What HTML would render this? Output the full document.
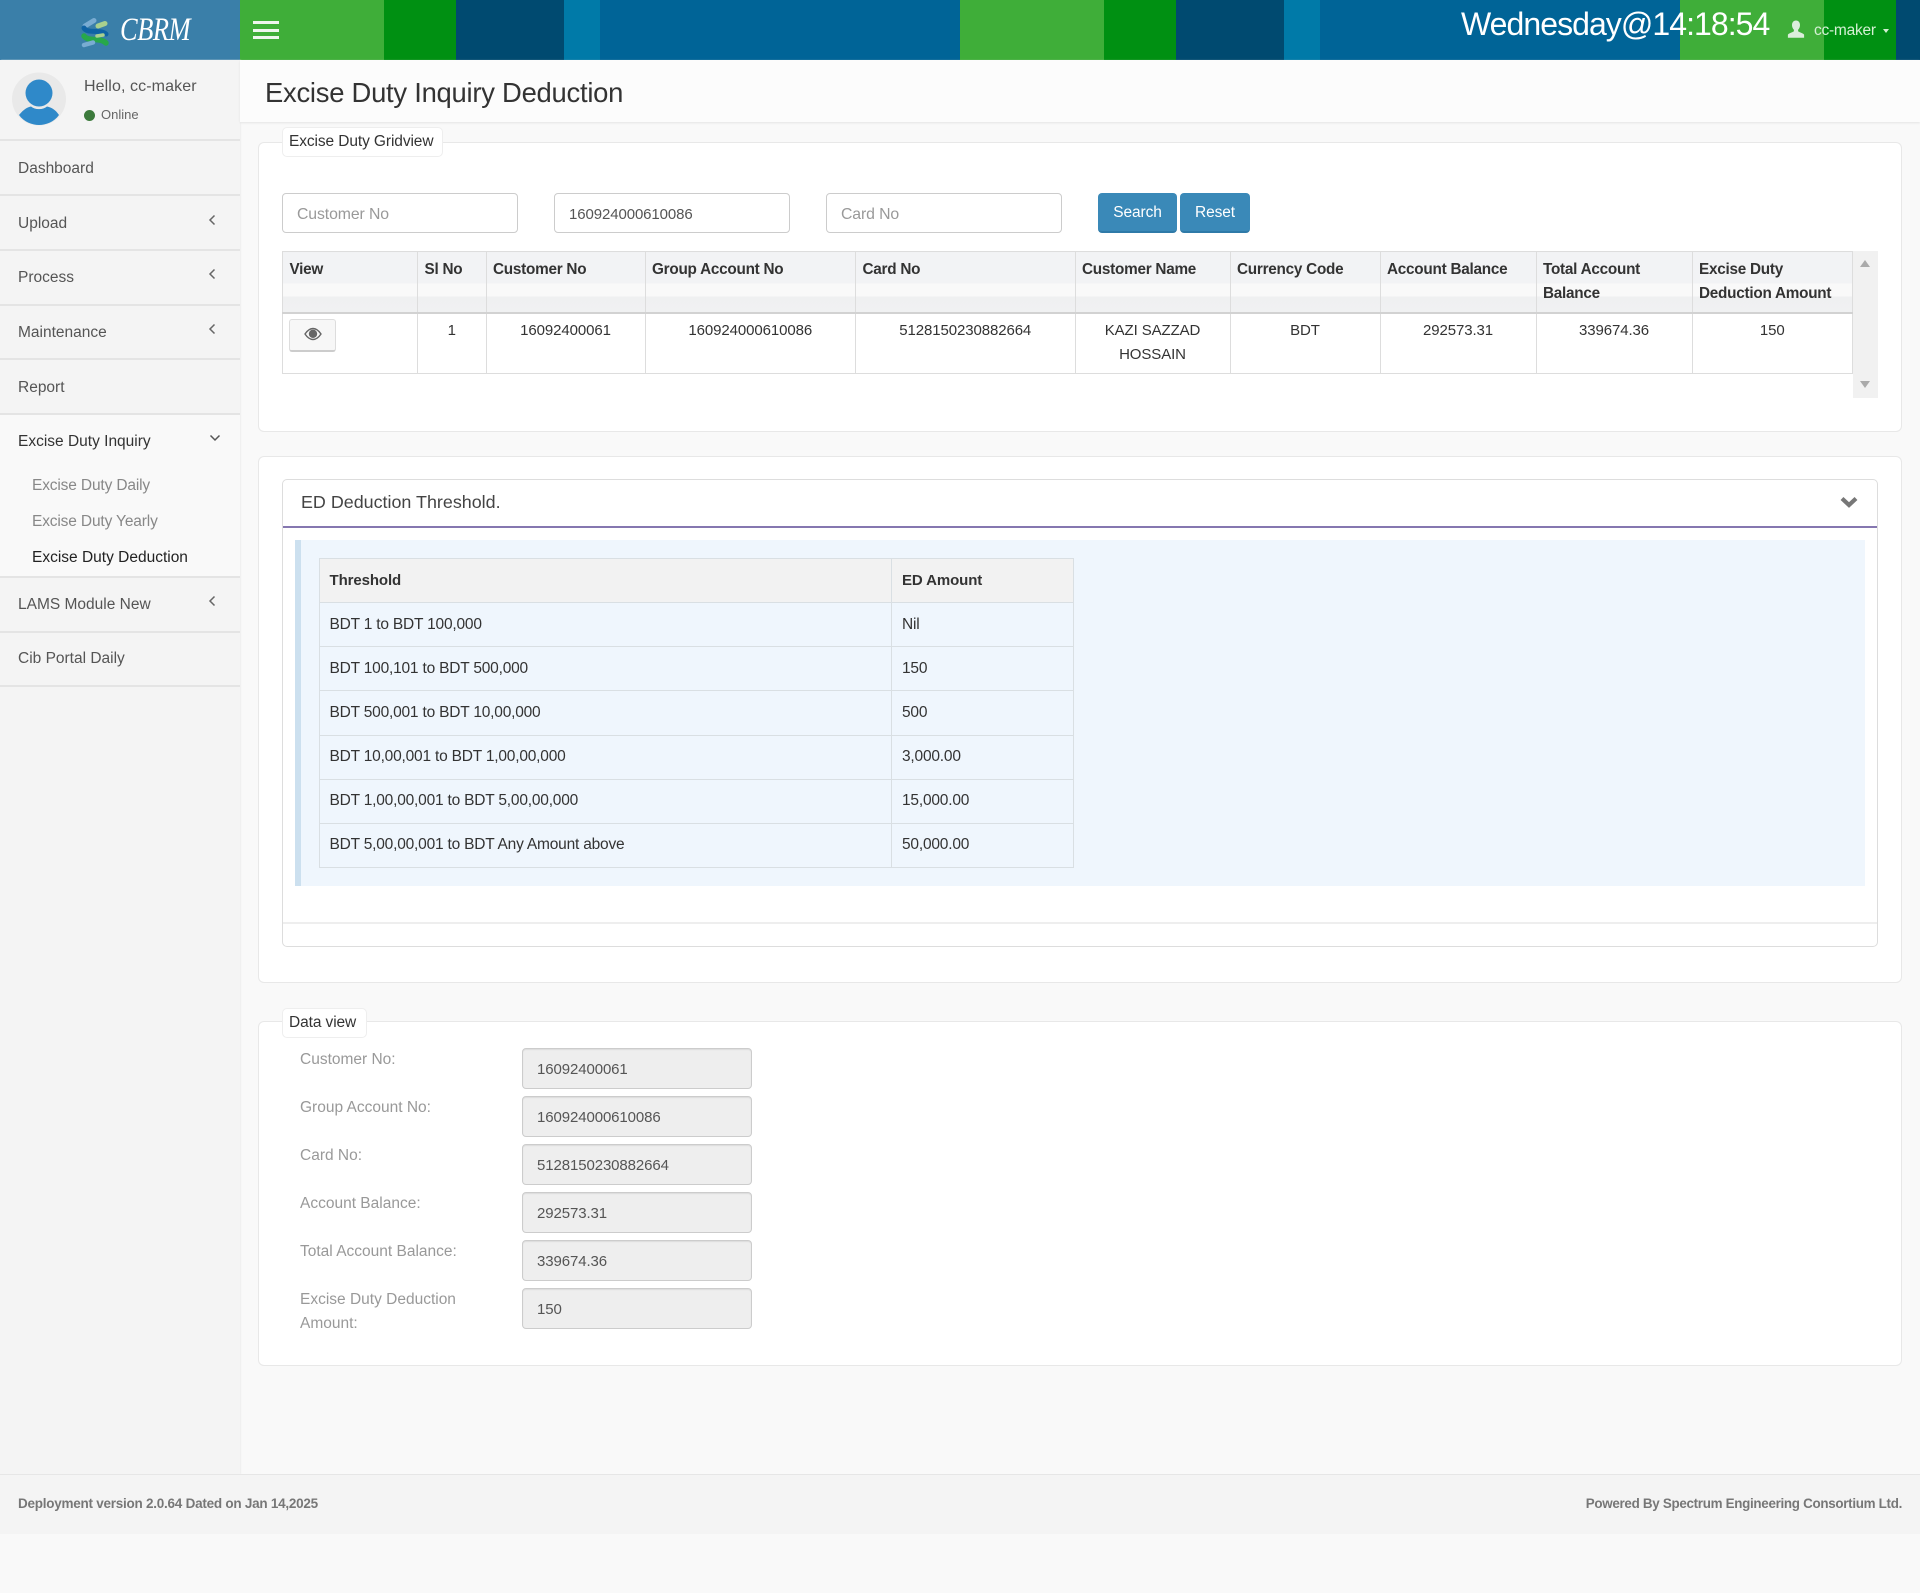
<!DOCTYPE html>
<html lang="en">
<head>
<meta charset="utf-8">
<title>Excise Duty Inquiry Deduction</title>
<style>
*{box-sizing:border-box}
html,body{margin:0;padding:0}
body{position:relative;width:1920px;height:1593px;overflow:hidden;background:#f9f9f9;font-family:"Liberation Sans",sans-serif;font-size:15.5px;color:#333;letter-spacing:-.1px}
.a{position:absolute}
.t{position:absolute;white-space:nowrap;height:24px;line-height:24px}
.stripe{position:absolute;top:0;height:60px}
.line{position:absolute;left:0;width:240px;height:2px;background:#e4e4e4}
.menu{color:#555;left:18px;letter-spacing:0}
.sub{left:32px;letter-spacing:-.15px}
.chev{position:absolute;left:208px}
.fs{position:absolute;left:258px;width:1644px;background:#fff;border:1.5px solid #e8e8e8;border-radius:6px}
.leg{position:absolute;left:282px;background:#fff;border:1.5px solid #eee;border-radius:5px;color:#333;line-height:27px;padding-left:6px}
input{position:absolute;font-family:"Liberation Sans",sans-serif;font-size:15px;letter-spacing:-.1px;border:1.5px solid #ccc;border-radius:4px;background:#fff;color:#555;padding:2px 14px 0;outline:0;margin:0}
input::placeholder{color:#999;opacity:1;font-size:15.8px;letter-spacing:-.1px}
.ro{left:522px;width:230px;height:41px;background:#eee;border-color:#ccc;box-shadow:inset 0 1px 1px rgba(0,0,0,.08)}
.btn{position:absolute;top:193px;height:40px;background:#3a89b8;border-bottom:2px solid #2f7aa8;border-radius:4px;color:#fff;text-align:center;line-height:39px}
table{border-collapse:collapse;table-layout:fixed;font-size:15.5px}
#g{position:absolute;left:282px;top:251px;width:1570.5px}
#g th,#g td{border:1.5px solid #ddd;padding:0 6.5px;vertical-align:top;line-height:24px}
#g th{height:61px;text-align:left;font-weight:bold;font-size:15.3px;color:#333;letter-spacing:-.25px;padding-top:6px;background:linear-gradient(#f2f3f5 0,#f2f3f5 31px,#f9f9f9 31px,#f9f9f9 44px,#eff0f1 44px,#f0f1f2 100%);border-bottom:2.5px solid #d2d2d2}
#g td{height:61px;text-align:center;font-size:15px;padding-top:5px;color:#333;background:#fff}
#th{position:absolute;left:319px;top:558px;width:754px}
#th th,#th td{border:1.5px solid #d9dfe3;padding:0 9.5px;height:44.15px;text-align:left;color:#333;letter-spacing:-.2px}
#th th{background:#f2f2f2;font-weight:bold;font-size:15px;letter-spacing:-.1px}
#th td+td,#th th+th{padding-left:10px}
.lbl{position:absolute;left:300px;color:#999;white-space:nowrap;line-height:24px;letter-spacing:0}
</style>
</head>
<body>

<!-- header -->
<div class="stripe" style="left:0;width:240px;background:#3a7fa9"></div>
<div class="stripe" style="left:240px;width:144px;background:#3fae39"></div>
<div class="stripe" style="left:384px;width:72px;background:#009012"></div>
<div class="stripe" style="left:456px;width:108px;background:#004a70"></div>
<div class="stripe" style="left:564px;width:36px;background:#007aa8"></div>
<div class="stripe" style="left:600px;width:360px;background:#006497"></div>
<div class="stripe" style="left:960px;width:144px;background:#3fae39"></div>
<div class="stripe" style="left:1104px;width:72px;background:#009012"></div>
<div class="stripe" style="left:1176px;width:108px;background:#004a70"></div>
<div class="stripe" style="left:1284px;width:36px;background:#007aa8"></div>
<div class="stripe" style="left:1320px;width:360px;background:#006497"></div>
<div class="stripe" style="left:1680px;width:144px;background:#3fae39"></div>
<div class="stripe" style="left:1824px;width:72px;background:#009012"></div>
<div class="stripe" style="left:1896px;width:24px;background:#004a70"></div>

<svg class="a" style="left:80px;top:17px" width="30" height="31" viewBox="0 0 30 31">
<path d="M5 9 L14 3.500" stroke="#79acd2" stroke-width="5" stroke-linecap="round" fill="none"/>
<path d="M18 9 L25 6.500" stroke="#a9d08e" stroke-width="5" stroke-linecap="round" fill="none"/>
<path d="M4 11 C7 17 20 12 26 17" stroke="#0f63a4" stroke-width="5" stroke-linecap="round" fill="none"/>
<path d="M4 19 C8 25 20 20 26 26" stroke="#27a84a" stroke-width="5.500" stroke-linecap="round" fill="none"/>
<path d="M4 28 L13 25.500" stroke="#79acd2" stroke-width="4.500" stroke-linecap="round" fill="none"/>
<path d="M17 19 L23 18" stroke="#a9d08e" stroke-width="3.500" stroke-linecap="round" fill="none"/>
</svg>
<div class="t" style="left:120px;top:14px;height:32px;line-height:32px;font-family:'Liberation Serif',serif;font-style:italic;font-size:33px;color:#fff;letter-spacing:-.5px;transform:scaleX(.8);transform-origin:left center">CBRM</div>

<div class="a" style="left:253px;top:21px;width:26px;height:2.5px;background:#eef6ee"></div>
<div class="a" style="left:253px;top:29px;width:26px;height:2.5px;background:#eef6ee"></div>
<div class="a" style="left:253px;top:36px;width:26px;height:2.5px;background:#eef6ee"></div>

<div class="t" style="left:1461px;top:6px;height:36px;line-height:36px;font-size:32px;color:#fff;letter-spacing:-.95px">Wednesday@14:18:54</div>
<svg class="a" style="left:1787px;top:20px" width="18" height="18" viewBox="0 0 18 18"><path d="M9 0.5c2.6 0 4 2 4 4.6 0 2-.8 3.6-1.9 4.6v1.4c0 .8 5.4 2 6 3.6v3H0.9v-3c.6-1.6 6-2.8 6-3.6V9.700C5.800 8.700 5 7.100 5 5.100 5 2.500 6.400.5 9 .5z" fill="#dbeedb"/></svg>
<div class="t" style="left:1814px;top:19px;color:#d4f0d4;font-size:15.5px;letter-spacing:-.25px">cc-maker</div>
<div class="a" style="left:1883px;top:29px;width:0;height:0;border-left:3.5px solid transparent;border-right:3.5px solid transparent;border-top:4px solid #d4f0d4"></div>

<!-- sidebar -->
<div class="a" style="left:0;top:60px;width:240px;height:1414px;background:#f4f4f4;box-shadow:1px 0 1px #eee"></div>
<div class="a" style="left:0;top:414px;width:240px;height:163px;background:#f9f9f9"></div>

<svg class="a" style="left:12px;top:72px" width="54" height="54" viewBox="0 0 54 54">
<defs><clipPath id="c"><ellipse cx="27" cy="27" rx="27" ry="26.500"/></clipPath></defs>
<ellipse cx="27" cy="27" rx="27" ry="26.500" fill="#e9e9e9"/>
<g clip-path="url(#c)">
<circle cx="27" cy="21" r="13.500" fill="#2f89c9"/>
<path d="M7 43 C12 37 15 35.500 19 34.500 C23 38 31 38 35 34.500 C39 35.500 43 37 47 43 C42 50 34 53 27 53 C20 53 12 50 7 43z" fill="#2f89c9"/>
</g>
</svg>
<div class="t" style="left:84px;top:75px;color:#555;font-size:16px;letter-spacing:.1px">Hello, cc-maker</div>
<div class="a" style="left:84px;top:110px;width:11px;height:11px;border-radius:50%;background:#3c7a3c"></div>
<div class="t" style="left:101px;top:103px;font-size:13px;letter-spacing:0;color:#666">Online</div>

<div class="line" style="top:139px"></div>
<div class="line" style="top:194px"></div>
<div class="line" style="top:249px"></div>
<div class="line" style="top:304px"></div>
<div class="line" style="top:358px"></div>
<div class="line" style="top:413px"></div>
<div class="line" style="top:576px"></div>
<div class="line" style="top:631px"></div>
<div class="line" style="top:685px"></div>

<div class="t menu" style="top:157px">Dashboard</div>
<div class="t menu" style="top:212px">Upload</div>
<div class="t menu" style="top:266px">Process</div>
<div class="t menu" style="top:321px">Maintenance</div>
<div class="t menu" style="top:376px">Report</div>
<div class="t menu" style="top:430px;color:#333">Excise Duty Inquiry</div>
<div class="t sub" style="top:474px;color:#888">Excise Duty Daily</div>
<div class="t sub" style="top:510px;color:#888">Excise Duty Yearly</div>
<div class="t sub" style="top:546px;color:#222;letter-spacing:0">Excise Duty Deduction</div>
<div class="t menu" style="top:593px">LAMS Module New</div>
<div class="t menu" style="top:647px">Cib Portal Daily</div>

<svg class="chev" style="top:214px" width="8" height="12" viewBox="0 0 8 12"><path d="M6.500 1.500 L2 6 L6.500 10.500" stroke="#666" stroke-width="1.500" fill="none"/></svg>
<svg class="chev" style="top:268px" width="8" height="12" viewBox="0 0 8 12"><path d="M6.500 1.500 L2 6 L6.500 10.500" stroke="#666" stroke-width="1.500" fill="none"/></svg>
<svg class="chev" style="top:323px" width="8" height="12" viewBox="0 0 8 12"><path d="M6.500 1.500 L2 6 L6.500 10.500" stroke="#666" stroke-width="1.500" fill="none"/></svg>
<svg class="chev" style="left:209px;top:434px" width="12" height="8" viewBox="0 0 12 8"><path d="M1.500 1.500 L6 6 L10.500 1.500" stroke="#555" stroke-width="1.500" fill="none"/></svg>
<svg class="chev" style="top:595px" width="8" height="12" viewBox="0 0 8 12"><path d="M6.500 1.500 L2 6 L6.500 10.500" stroke="#666" stroke-width="1.500" fill="none"/></svg>

<!-- page title -->
<div class="a" style="left:240px;top:60px;width:1680px;height:62px;background:#fcfcfc;box-shadow:0 1px 2px #e4e4e4"></div>
<div class="t" style="left:265px;top:76px;height:34px;line-height:34px;font-size:27.4px;color:#333;letter-spacing:-.25px">Excise Duty Inquiry Deduction</div>

<!-- gridview fieldset -->
<div class="fs" style="top:142px;height:290px"></div>
<div class="leg" style="top:127px;width:161px;height:30px">Excise Duty Gridview</div>
<input style="left:282px;top:193px;width:236px;height:40px" placeholder="Customer No">
<input style="left:554px;top:193px;width:236px;height:40px" value="160924000610086">
<input style="left:826px;top:193px;width:236px;height:40px" placeholder="Card No">
<div class="btn" style="left:1098px;width:79px">Search</div>
<div class="btn" style="left:1180px;width:70px">Reset</div>

<table id="g">
<colgroup><col style="width:135px"><col style="width:68.500px"><col style="width:159px"><col style="width:210.500px"><col style="width:219.500px"><col style="width:155px"><col style="width:150px"><col style="width:156px"><col style="width:156px"><col style="width:160.500px"></colgroup>
<tr><th>View</th><th>Sl No</th><th>Customer No</th><th>Group Account No</th><th>Card No</th><th>Customer Name</th><th>Currency Code</th><th>Account Balance</th><th>Total Account<br>Balance</th><th>Excise Duty<br>Deduction Amount</th></tr>
<tr><td></td><td>1</td><td>16092400061</td><td>160924000610086</td><td>5128150230882664</td><td>KAZI SAZZAD<br>HOSSAIN</td><td>BDT</td><td>292573.31</td><td>339674.36</td><td>150</td></tr>
</table>
<div class="a" style="left:289px;top:319px;width:47px;height:33px;background:#f7f7f7;border:1px solid #ddd;border-bottom:2px solid #ccc;border-radius:3px"></div>
<svg class="a" style="left:304px;top:327px" width="18" height="14" viewBox="0 0 18 14"><path d="M1 7 C4 2.500 6.500 1.500 9 1.500 C11.500 1.500 14 2.500 17 7 C14 11.500 11.500 12.500 9 12.500 C6.500 12.500 4 11.500 1 7z" fill="none" stroke="#666" stroke-width="1.400"/><circle cx="9" cy="6.800" r="4.200" fill="#666"/></svg>

<div class="a" style="left:1853px;top:251px;width:25px;height:147px;background:#f1f1f1"></div>
<div class="a" style="left:1860px;top:260px;width:0;height:0;border-left:5.500px solid transparent;border-right:5.500px solid transparent;border-bottom:7px solid #aaa"></div>
<div class="a" style="left:1860px;top:381px;width:0;height:0;border-left:5.500px solid transparent;border-right:5.500px solid transparent;border-top:7px solid #aaa"></div>

<!-- threshold fieldset -->
<div class="fs" style="top:456px;height:527px"></div>
<div class="a" style="left:282px;top:479px;width:1596px;height:468px;background:#fff;border:1.500px solid #ddd;border-radius:5px"></div>
<div class="t" style="left:301px;top:490px;font-size:17.9px;color:#444;letter-spacing:0">ED Deduction Threshold.</div>
<svg class="a" style="left:1839px;top:495px" width="20" height="14" viewBox="0 0 20 14"><path d="M3 3.500 L10 10 L17 3.500" stroke="#777" stroke-width="4.200" fill="none"/></svg>
<div class="a" style="left:283px;top:526px;width:1594px;height:2px;background:#8577b0"></div>
<div class="a" style="left:295px;top:540px;width:1570px;height:346px;background:#eff6fd;border-left:6px solid #cce0ef"></div>
<table id="th">
<colgroup><col style="width:572px"><col style="width:182px"></colgroup>
<tr><th>Threshold</th><th>ED Amount</th></tr>
<tr><td>BDT 1 to BDT 100,000</td><td>Nil</td></tr>
<tr><td>BDT 100,101 to BDT 500,000</td><td>150</td></tr>
<tr><td>BDT 500,001 to BDT 10,00,000</td><td>500</td></tr>
<tr><td>BDT 10,00,001 to BDT 1,00,00,000</td><td>3,000.00</td></tr>
<tr><td>BDT 1,00,00,001 to BDT 5,00,00,000</td><td>15,000.00</td></tr>
<tr><td>BDT 5,00,00,001 to BDT Any Amount above</td><td>50,000.00</td></tr>
</table>
<div class="a" style="left:283px;top:922px;width:1594px;height:2px;background:#eee"></div>

<!-- data view fieldset -->
<div class="fs" style="top:1021px;height:345px"></div>
<div class="leg" style="top:1008px;width:85px;height:30px">Data view</div>
<div class="lbl" style="top:1048px">Customer No:</div>
<div class="lbl" style="top:1096px">Group Account No:</div>
<div class="lbl" style="top:1144px">Card No:</div>
<div class="lbl" style="top:1192px">Account Balance:</div>
<div class="lbl" style="top:1240px">Total Account Balance:</div>
<div class="lbl" style="top:1288px">Excise Duty Deduction<br>Amount:</div>
<input class="ro" style="top:1048px" value="16092400061" readonly>
<input class="ro" style="top:1096px" value="160924000610086" readonly>
<input class="ro" style="top:1144px" value="5128150230882664" readonly>
<input class="ro" style="top:1192px" value="292573.31" readonly>
<input class="ro" style="top:1240px" value="339674.36" readonly>
<input class="ro" style="top:1288px" value="150" readonly>

<!-- footer -->
<div class="a" style="left:0;top:1474px;width:1920px;height:60px;background:#f4f4f4;border-top:1px solid #e6e6e6"></div>
<div class="t" style="left:18px;top:1492px;font-size:13.5px;font-weight:bold;color:#777;letter-spacing:-.25px">Deployment version 2.0.64 Dated on Jan 14,2025</div>
<div class="t" style="right:18px;top:1492px;font-size:13.4px;font-weight:bold;color:#777;letter-spacing:-.3px">Powered By Spectrum Engineering Consortium Ltd.</div>

</body>
</html>
